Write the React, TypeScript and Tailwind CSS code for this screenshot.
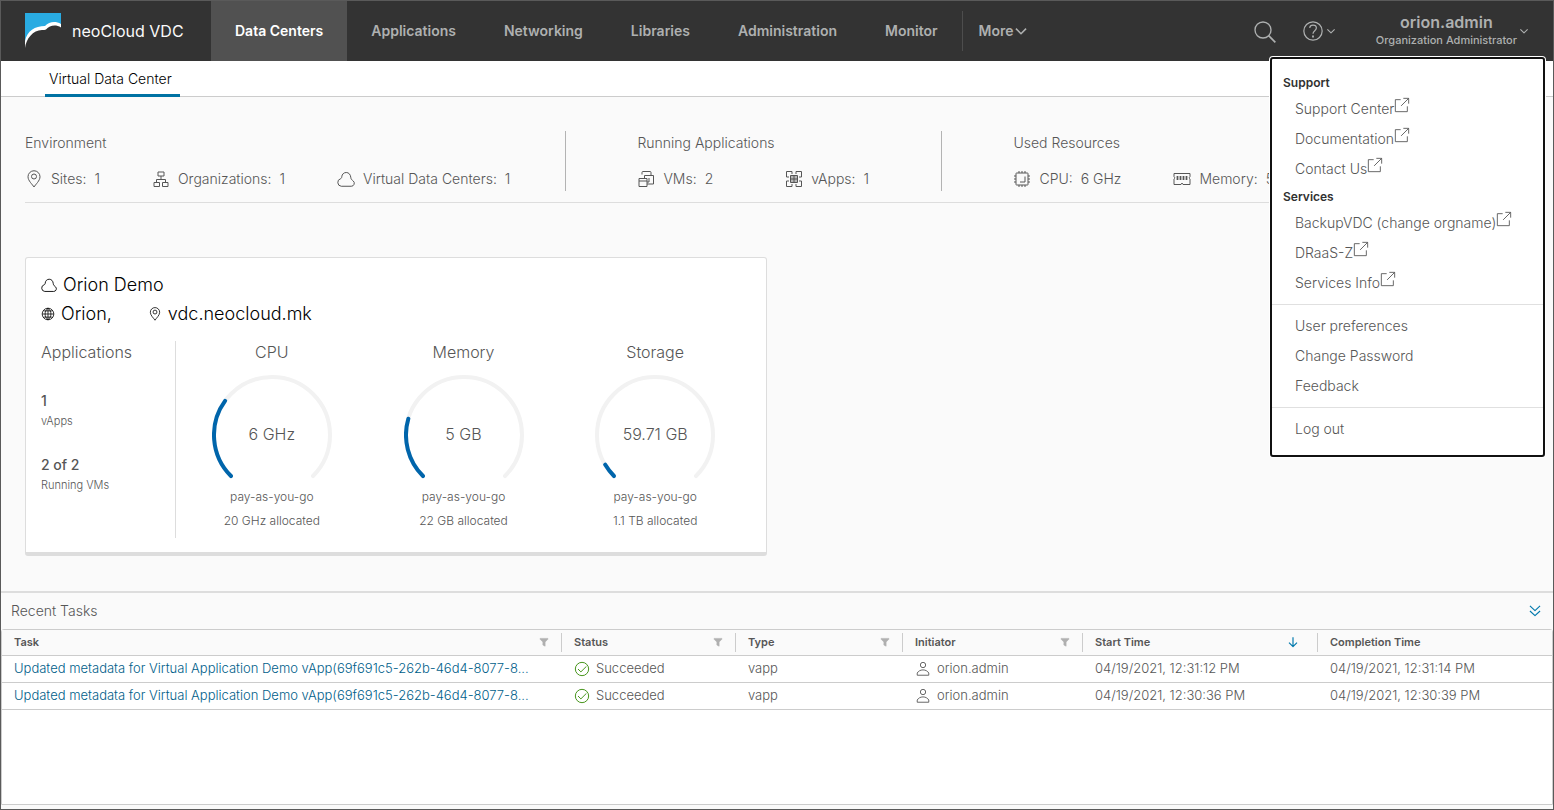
import type { ReactNode } from 'react';

type IconProps = { className?: string };

function Icon({ className = 'h-4 w-4', children }: IconProps & { children: ReactNode }) {
  return (
    <svg
      viewBox="0 0 36 36"
      fill="none"
      stroke="currentColor"
      strokeWidth="2"
      strokeLinejoin="round"
      aria-hidden="true"
      className={`shrink-0 ${className}`}
    >
      {children}
    </svg>
  );
}

const PinIcon = ({ className }: IconProps) => (
  <Icon className={className}>
    <path d="M18 34C15 29 6 21.5 6 13.5a12 12 0 0 1 24 0C30 21.5 21 29 18 34Z" />
    <circle cx="18" cy="13" r="5" />
  </Icon>
);

const OrgIcon = ({ className }: IconProps) => (
  <Icon className={className}>
    <path d="M12 4h12v8H12zM4 25h11v8H4zM21 25h11v8H21zM18 12v7M9 25v-6h18v6" />
  </Icon>
);

const CloudIcon = ({ className }: IconProps) => (
  <Icon className={className}>
    <path d="M8.5 32.5h20a6 6 0 0 0 4-10.5c-2-2-4.500-2.500-5-7.500C27 9 23.500 5 18.500 5S10 8.500 9.500 13.500C9.300 16 9 16.500 7 17.500a7.700 7.700 0 0 0 1.500 15Z" />
  </Icon>
);

const VmIcon = ({ className }: IconProps) => (
  <Icon className={className}>
    <path d="M10 9V5a2 2 0 0 1 2-2h14a2 2 0 0 1 2 2v5M4 17h16v16H4zM4 22h16M15 17v-6h18v17H20M24 16v8h-4" />
  </Icon>
);

const VappIcon = ({ className }: IconProps) => (
  <Icon className={className}>
    <path d="M8 14H3V3h11v5M22 8V3h11v11h-5M28 22h5v11H22v-5M14 28v5H3V22h5" />
    <path d="M11 11h14v14H11z" fill="currentColor" fillOpacity="0.4" />
    <path d="M18 11v14M11 18h14" />
  </Icon>
);

const CpuIcon = ({ className }: IconProps) => (
  <Icon className={className}>
    <rect x="6" y="6" width="24" height="24" rx="1" />
    <path d="M24 13v11H14M12 6V2M18 6V2M24 6V2M12 34v-4M18 34v-4M24 34v-4M6 12H2M6 18H2M6 24H2M34 12h-4M34 18h-4M34 24h-4" />
  </Icon>
);

const MemoryIcon = ({ className }: IconProps) => (
  <Icon className={className}>
    <path d="M2 13V7h32v6a3 3 0 0 0 0 5v11H20l-2-3-2 3H2V18a3 3 0 0 0 0-5Z" />
    <path d="M9 12v8M15 12v8M21 12v8M27 12v8" strokeWidth="3.500" />
  </Icon>
);

const GlobeIcon = ({ className }: IconProps) => (
  <Icon className={className}>
    <circle cx="18" cy="18" r="15" />
    <path d="M3 18h30M6 10h24M6 26h24M18 3v30M18 3c-10 8-10 22 0 30M18 3c10 8 10 22 0 30" />
  </Icon>
);

const PopOutIcon = ({ className }: IconProps) => (
  <Icon className={className}>
    <path d="M15 6H3v27h27V21M21 3h12v12M33 3 16 20" />
  </Icon>
);

const UserIcon = ({ className }: IconProps) => (
  <Icon className={className}>
    <circle cx="18" cy="9" r="6" />
    <path d="M5 32v-5c2.500-4 7-7 13-7s10.500 3 13 7v5Z" />
  </Icon>
);

const SuccessIcon = ({ className }: IconProps) => (
  <Icon className={className}>
    <circle cx="18" cy="18" r="15" />
    <path d="m9 18 6.500 6.500L28 12" />
  </Icon>
);

const CaretIcon = ({ className }: IconProps) => (
  <Icon className={className}>
    <path d="m5 12 13 13 13-13" strokeWidth="4" />
  </Icon>
);

const SearchIcon = ({ className }: IconProps) => (
  <Icon className={className}>
    <circle cx="15" cy="15" r="12" />
    <path d="m23.500 23.500 10 10" strokeWidth="2.500" />
  </Icon>
);

const HelpIcon = ({ className }: IconProps) => (
  <Icon className={className}>
    <circle cx="18" cy="18" r="15" />
    <path d="M12.500 13c.5-3 2.500-4.500 5.500-4.500s5.500 1.800 5.500 4.700c0 4.300-5.500 4.300-5.500 9.300" />
    <path d="M18 25.500v3" strokeWidth="3" />
  </Icon>
);

const FilterIcon = ({ className }: IconProps) => (
  <Icon className={className}>
    <path d="M4 5h28v3L22 18v15l-8-4V18L4 8Z" fill="currentColor" />
  </Icon>
);

const SortIcon = ({ className }: IconProps) => (
  <Icon className={className}>
    <path d="M18 4v27M6 20l12 12 12-12" strokeWidth="3.500" />
  </Icon>
);

const CollapseIcon = ({ className }: IconProps) => (
  <Icon className={className}>
    <path d="m5 5 13 12L31 5M5 18l13 12 13-12" strokeWidth="3" />
  </Icon>
);

function Logo() {
  return (
    <svg viewBox="0 0 36 36" className="h-9 w-9 shrink-0" aria-hidden="true">
      <path d="M0 0h36v12c-5-3-10-2-14 2C11 14 3 19 0 31Z" fill="#29abe2" />
      <path
        d="M0 35C1 26 8 17 17 17c2 0 3 0 4-.5C25 12 31 11.500 36 14.500V11c-6-3.500-12-2-16 2C10 13 2 18 0 28Z"
        fill="#fff"
      />
    </svg>
  );
}

const NAV = ['Data Centers', 'Applications', 'Networking', 'Libraries', 'Administration', 'Monitor'];

const SUMMARY = [
  {
    title: 'Environment',
    box: 'w-[36%] border-r',
    gap: 'gap-[52px]',
    stats: [
      { icon: PinIcon, label: 'Sites:', value: '1' },
      { icon: OrgIcon, label: 'Organizations:', value: '1' },
      { icon: CloudIcon, label: 'Virtual Data Centers:', value: '1' },
    ],
  },
  {
    title: 'Running Applications',
    box: 'w-1/4 border-r pl-[71px]',
    gap: 'gap-[72px]',
    stats: [
      { icon: VmIcon, label: 'VMs:', value: '2' },
      { icon: VappIcon, label: 'vApps:', value: '1' },
    ],
  },
  {
    title: 'Used Resources',
    box: 'flex-1 pl-[71px]',
    gap: 'gap-[52px]',
    stats: [
      { icon: CpuIcon, label: 'CPU:', value: '6 GHz' },
      { icon: MemoryIcon, label: 'Memory:', value: '5 GB' },
    ],
  },
];

const GAUGES = [
  { title: 'CPU', value: '6 GHz', allocated: '20 GHz allocated', ratio: 0.3 },
  { title: 'Memory', value: '5 GB', allocated: '22 GB allocated', ratio: 0.227 },
  { title: 'Storage', value: '59.71 GB', allocated: '1.1 TB allocated', ratio: 0.053 },
];

const MENU = [
  { title: 'Support', links: ['Support Center', 'Documentation', 'Contact Us'] },
  { title: 'Services', links: ['BackupVDC (change orgname)', 'DRaaS-Z', 'Services Info'] },
];

const COLUMNS = [
  { label: 'Task', width: 'w-[560px]', tool: 'filter' },
  { label: 'Status', width: 'w-[174px]', tool: 'filter' },
  { label: 'Type', width: 'w-[167px]', tool: 'filter' },
  { label: 'Initiator', width: 'w-[180px]', tool: 'filter' },
  { label: 'Start Time', width: 'w-[235px]', tool: 'sort' },
  { label: 'Completion Time', width: '', tool: '' },
];

const TASKS = [
  { id: 1, start: '04/19/2021, 12:31:12 PM', end: '04/19/2021, 12:31:14 PM' },
  { id: 2, start: '04/19/2021, 12:30:36 PM', end: '04/19/2021, 12:30:39 PM' },
];

// Dial opens at the bottom: 270 degrees starting from the lower left
function arc(ratio: number) {
  const point = (deg: number) => {
    const rad = (deg * Math.PI) / 180;
    return `${60 + 58 * Math.cos(rad)} ${60 + 58 * Math.sin(rad)}`;
  };
  const sweep = 270 * ratio;
  return `M${point(135)}A58 58 0 ${sweep > 180 ? 1 : 0} 1 ${point(135 + sweep)}`;
}

function Gauge({ title, value, allocated, ratio }: (typeof GAUGES)[number]) {
  return (
    <div className="flex-1 text-center">
      <h3 className="text-base leading-[22px]">{title}</h3>
      <div className="relative mx-auto mt-3 w-[120px]">
        <svg viewBox="0 0 120 108" className="block w-full" fill="none" strokeWidth="4" strokeLinecap="round">
          <path d={arc(1)} stroke="#f2f2f2" />
          <path d={arc(ratio)} stroke="#0065ab" />
        </svg>
        <span className="absolute inset-x-0 top-[47px] text-base leading-6">{value}</span>
      </div>
      <p className="mt-0.5 text-xs leading-6">pay-as-you-go</p>
      <p className="text-xs leading-6">{allocated}</p>
    </div>
  );
}

function AccountMenu() {
  return (
    <div className="absolute top-[55px] right-[7px] z-10 w-[277px] rounded-[4px] bg-white p-px">
      <div className="rounded-[3px] border-2 border-[#111] pt-3 pb-[11px] text-sm text-[#565656]">
        {MENU.map((group) => (
          <div key={group.title}>
            <h4 className="px-[11px] text-xs leading-6 font-semibold text-[#313131]">{group.title}</h4>
            {group.links.map((link) => (
              <a key={link} href="#" className="flex h-[30px] pl-[23px] leading-7">
                {link}
                <PopOutIcon className="mt-0.5 h-4 w-4" />
              </a>
            ))}
          </div>
        ))}
        <hr className="mt-[5px] mb-1.5 border-[#e0e0e0]" />
        {['User preferences', 'Change Password', 'Feedback'].map((item) => (
          <button key={item} className="block h-[30px] w-full pl-[23px] text-left">
            {item}
          </button>
        ))}
        <hr className="my-1.5 border-[#e0e0e0]" />
        <button className="block h-[30px] w-full pl-[23px] text-left">Log out</button>
      </div>
    </div>
  );
}

function Header() {
  return (
    <header className="relative flex h-[60px] bg-[#333] text-[#aeb0b0]">
      <a href="#" className="flex w-[210px] items-center gap-[11px] pl-6 text-base font-normal text-[#fafafa]">
        <Logo />
        neoCloud VDC
      </a>
      <nav className="flex text-sm font-semibold">
        {NAV.map((item, i) => (
          <a
            key={item}
            href="#"
            className={`flex items-center px-6 ${i === 0 ? 'bg-[#515151] text-white' : ''}`}
          >
            {item}
          </a>
        ))}
        <button className="my-2.5 flex items-center border-l border-[#4d4d4d] pl-4">
          More
          <CaretIcon className="h-3.5 w-3.5" />
        </button>
      </nav>
      <div className="ml-auto flex items-center pr-6">
        <button aria-label="Search" className="pt-0.5">
          <SearchIcon className="h-6 w-6" />
        </button>
        <button aria-label="Help" className="ml-[25px] flex items-center gap-0.5">
          <HelpIcon className="h-[22px] w-[22px]" />
          <CaretIcon className="h-2.5 w-2.5" />
        </button>
        <button className="ml-10 flex items-center font-semibold">
          <span className="pb-0.5">
            <span className="block text-base leading-5">orion.admin</span>
            <span className="block text-[11px] leading-4 font-medium">Organization Administrator</span>
          </span>
          <CaretIcon className="ml-0.5 h-2.5 w-2.5" />
        </button>
      </div>
      <AccountMenu />
    </header>
  );
}

function Summary() {
  return (
    <section className="flex border-b border-[#ddd] pb-[11px]">
      {SUMMARY.map((group) => (
        <div key={group.title} className={`border-[#b3b3b3] text-sm leading-6 ${group.box}`}>
          <h2>{group.title}</h2>
          <ul className={`mt-3 flex whitespace-nowrap ${group.gap}`}>
            {group.stats.map(({ icon: StatIcon, label, value }) => (
              <li key={label} className="flex items-center gap-2">
                <StatIcon className="h-[18px] w-[18px]" />
                <span>{label}</span>
                <span>{value}</span>
              </li>
            ))}
          </ul>
        </div>
      ))}
    </section>
  );
}

function DatacenterCard() {
  return (
    <article className="rounded-[3px] border border-b-4 border-[#ddd] bg-white px-[15px] pt-3 pb-3.5">
      <h2 className="flex items-center gap-1.5 text-lg leading-[30px] text-black">
        <CloudIcon className="h-4 w-4" />
        Orion Demo
      </h2>
      <div className="flex gap-9 text-lg leading-7 text-black">
        <span className="flex items-center gap-1.5">
          <GlobeIcon className="h-3.5 w-3.5" />
          Orion,
        </span>
        <span className="flex items-center gap-1.5">
          <PinIcon className="h-3.5 w-3.5" />
          vdc.neocloud.mk
        </span>
      </div>
      <div className="mt-[13px] flex h-[197px]">
        <div className="w-[135px] border-r border-[#ddd]">
          <h3 className="text-base leading-[22px]">Applications</h3>
          <p className="mt-7 text-sm leading-5 font-medium">1</p>
          <p className="text-[11px] leading-5">vApps</p>
          <p className="mt-6 text-sm leading-5 font-medium">2 of 2</p>
          <p className="text-[11px] leading-5">Running VMs</p>
        </div>
        {GAUGES.map((gauge) => (
          <Gauge key={gauge.title} {...gauge} />
        ))}
      </div>
    </article>
  );
}

function RecentTasks() {
  return (
    <section className="flex flex-1 flex-col border-t-2 border-[#ddd] pb-1">
      <div className="flex h-9 items-center justify-between pr-[11px] pl-2.5">
        <h2 className="text-sm">Recent Tasks</h2>
        <button aria-label="Collapse recent tasks" className="text-[#0079ad]">
          <CollapseIcon className="h-3.5 w-3.5" />
        </button>
      </div>
      <div className="flex-1 rounded-t-[3px] border border-[#ccc] bg-white">
        <table className="w-full table-fixed border-collapse text-left text-[13px]">
          <thead className="bg-[#fafafa] text-[11px]">
            <tr className="border-b border-[#ccc]">
              {COLUMNS.map((col) => (
                <th key={col.label} className={`h-[25px] p-0 font-semibold ${col.width}`}>
                  <div
                    className={`flex h-[19px] items-center justify-between px-3 ${
                      col.tool ? 'border-r border-[#ccc]' : ''
                    }`}
                  >
                    {col.label}
                    {col.tool === 'filter' && (
                      <button aria-label={`Filter ${col.label}`} className="text-[#b0b0b0]">
                        <FilterIcon className="h-2.5 w-2.5" />
                      </button>
                    )}
                    {col.tool === 'sort' && (
                      <button aria-label="Sort by start time" className="mr-1.5 text-[#0079ad]">
                        <SortIcon className="h-3 w-3" />
                      </button>
                    )}
                  </div>
                </th>
              ))}
            </tr>
          </thead>
          <tbody>
            {TASKS.map((task) => (
              <tr key={task.id} className="h-[27px] border-b border-[#ccc]">
                <td className="py-0 pl-3 whitespace-nowrap">
                  <a href="#" className="text-[#00608a]">
                    Updated metadata for Virtual Application Demo vApp(69f691c5-262b-46d4-8077-8...
                  </a>
                </td>
                <td className="px-3 py-0">
                  <span className="flex items-center gap-1.5">
                    <SuccessIcon className="h-4 w-4 text-[#318700]" />
                    Succeeded
                  </span>
                </td>
                <td className="px-3 py-0">vapp</td>
                <td className="px-3 py-0">
                  <span className="flex items-center gap-1.5">
                    <UserIcon className="h-4 w-4" />
                    orion.admin
                  </span>
                </td>
                <td className="px-3 py-0">{task.start}</td>
                <td className="px-3 py-0">{task.end}</td>
              </tr>
            ))}
          </tbody>
        </table>
      </div>
    </section>
  );
}

export default function App() {
  return (
    <div className="flex min-h-screen flex-col border border-[#5a5a5a] bg-[#fafafa] font-['Inter',sans-serif] font-light text-[#565656]">
      <Header />
      <nav className="flex h-9 border-b border-[#ccc] bg-white pl-11">
        <a href="#" className="h-9 border-b-3 border-[#0072a3] pr-2 pl-1 text-sm leading-9 text-black">
          Virtual Data Center
        </a>
      </nav>
      <main className="px-6 pt-[34px] pb-[35px]">
        <Summary />
        <div className="mt-[54px] grid grid-cols-2 gap-5">
          <DatacenterCard />
        </div>
      </main>
      <RecentTasks />
    </div>
  );
}
